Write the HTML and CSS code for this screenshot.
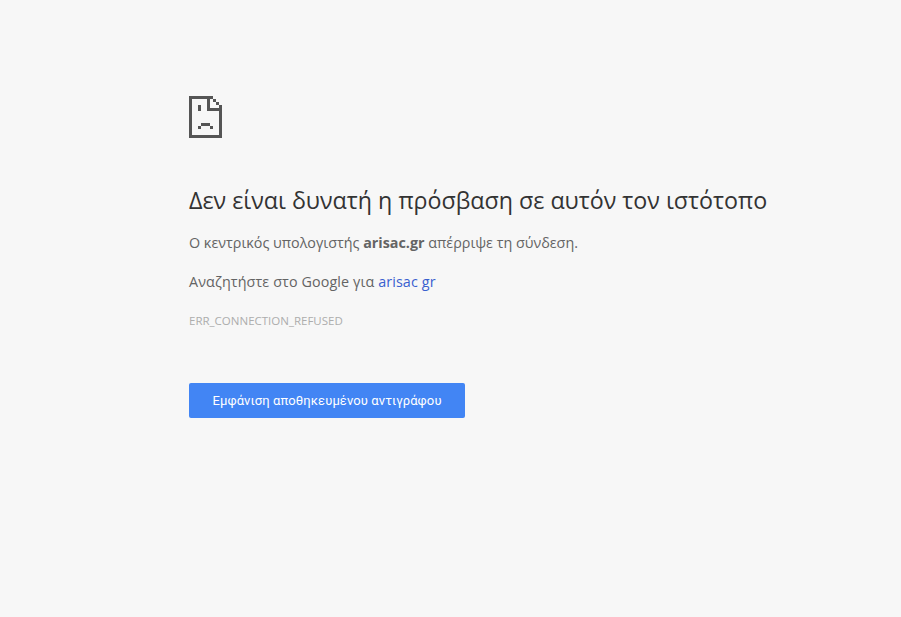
FILE: index.html
```html
<!DOCTYPE html>
<html lang="el">
<head>
<meta charset="utf-8">
<title>arisac.gr</title>
<link rel="stylesheet" href="styles.css">
</head>
<body>
<main class="page">
  <svg class="icon" width="33" height="42" viewBox="0 0 11 14" shape-rendering="crispEdges" aria-hidden="true">
    <path fill="#555" d="M0 0h8v1H0zM0 0h1v14H0zM0 13h11v1H0zM10 3h1v11h-1zM6 0h1v5H6zM6 4h5v1H6zM8 1h1v1H8zM9 2h1v1H9z"/>
    <path fill="#555" d="M3 3h1v2H3zM4 9h3v1H4zM3 10h1v1H3zM7 10h1v1H7z"/>
  </svg>
  <h1 class="title">Δεν είναι δυνατή η πρόσβαση σε αυτόν τον ιστότοπο</h1>
  <p class="line">Ο κεντρικός υπολογιστής <strong>arisac.gr</strong> απέρριψε τη σύνδεση.</p>
  <p class="line line-search">Αναζητήστε στο Google για <a class="link" href="#">arisac gr</a></p>
  <div class="code">ERR_CONNECTION_REFUSED</div>
  <button class="btn">Εμφάνιση αποθηκευμένου αντιγράφου</button>
</main>
</body>
</html>
```
FILE: styles.css
```css
html, body { margin: 0; height: 100%; }
body { background: #f7f7f7; color: #646464; font-family: "Open Sans", "Noto Sans", sans-serif; font-size: 14.33px; }
.page { padding: 96px 0 0 189px; display: flex; flex-direction: column; align-items: flex-start; }
.icon { display: block; margin-bottom: 46px; }
.title { margin: 0 0 17px; font-size: 23.25px; line-height: 32px; font-weight: 400; color: #333; white-space: nowrap; }
.line { margin: 0 0 19px; line-height: 20px; }
.line strong { font-weight: 700; }
.line-search { letter-spacing: 0.11px; }
.link { color: #3a60cf; text-decoration: none; }
.code { margin-top: 2px; font-size: 11.5px; line-height: 16px; color: #adadad; text-transform: uppercase; }
.btn { margin-top: 54px; width: 276px; height: 35px; padding: 0; border: 0; border-radius: 2px; background: #4285f4; color: #fff; font-family: Roboto, sans-serif; font-size: 13px; font-weight: 400; letter-spacing: 0.1px; }
```
